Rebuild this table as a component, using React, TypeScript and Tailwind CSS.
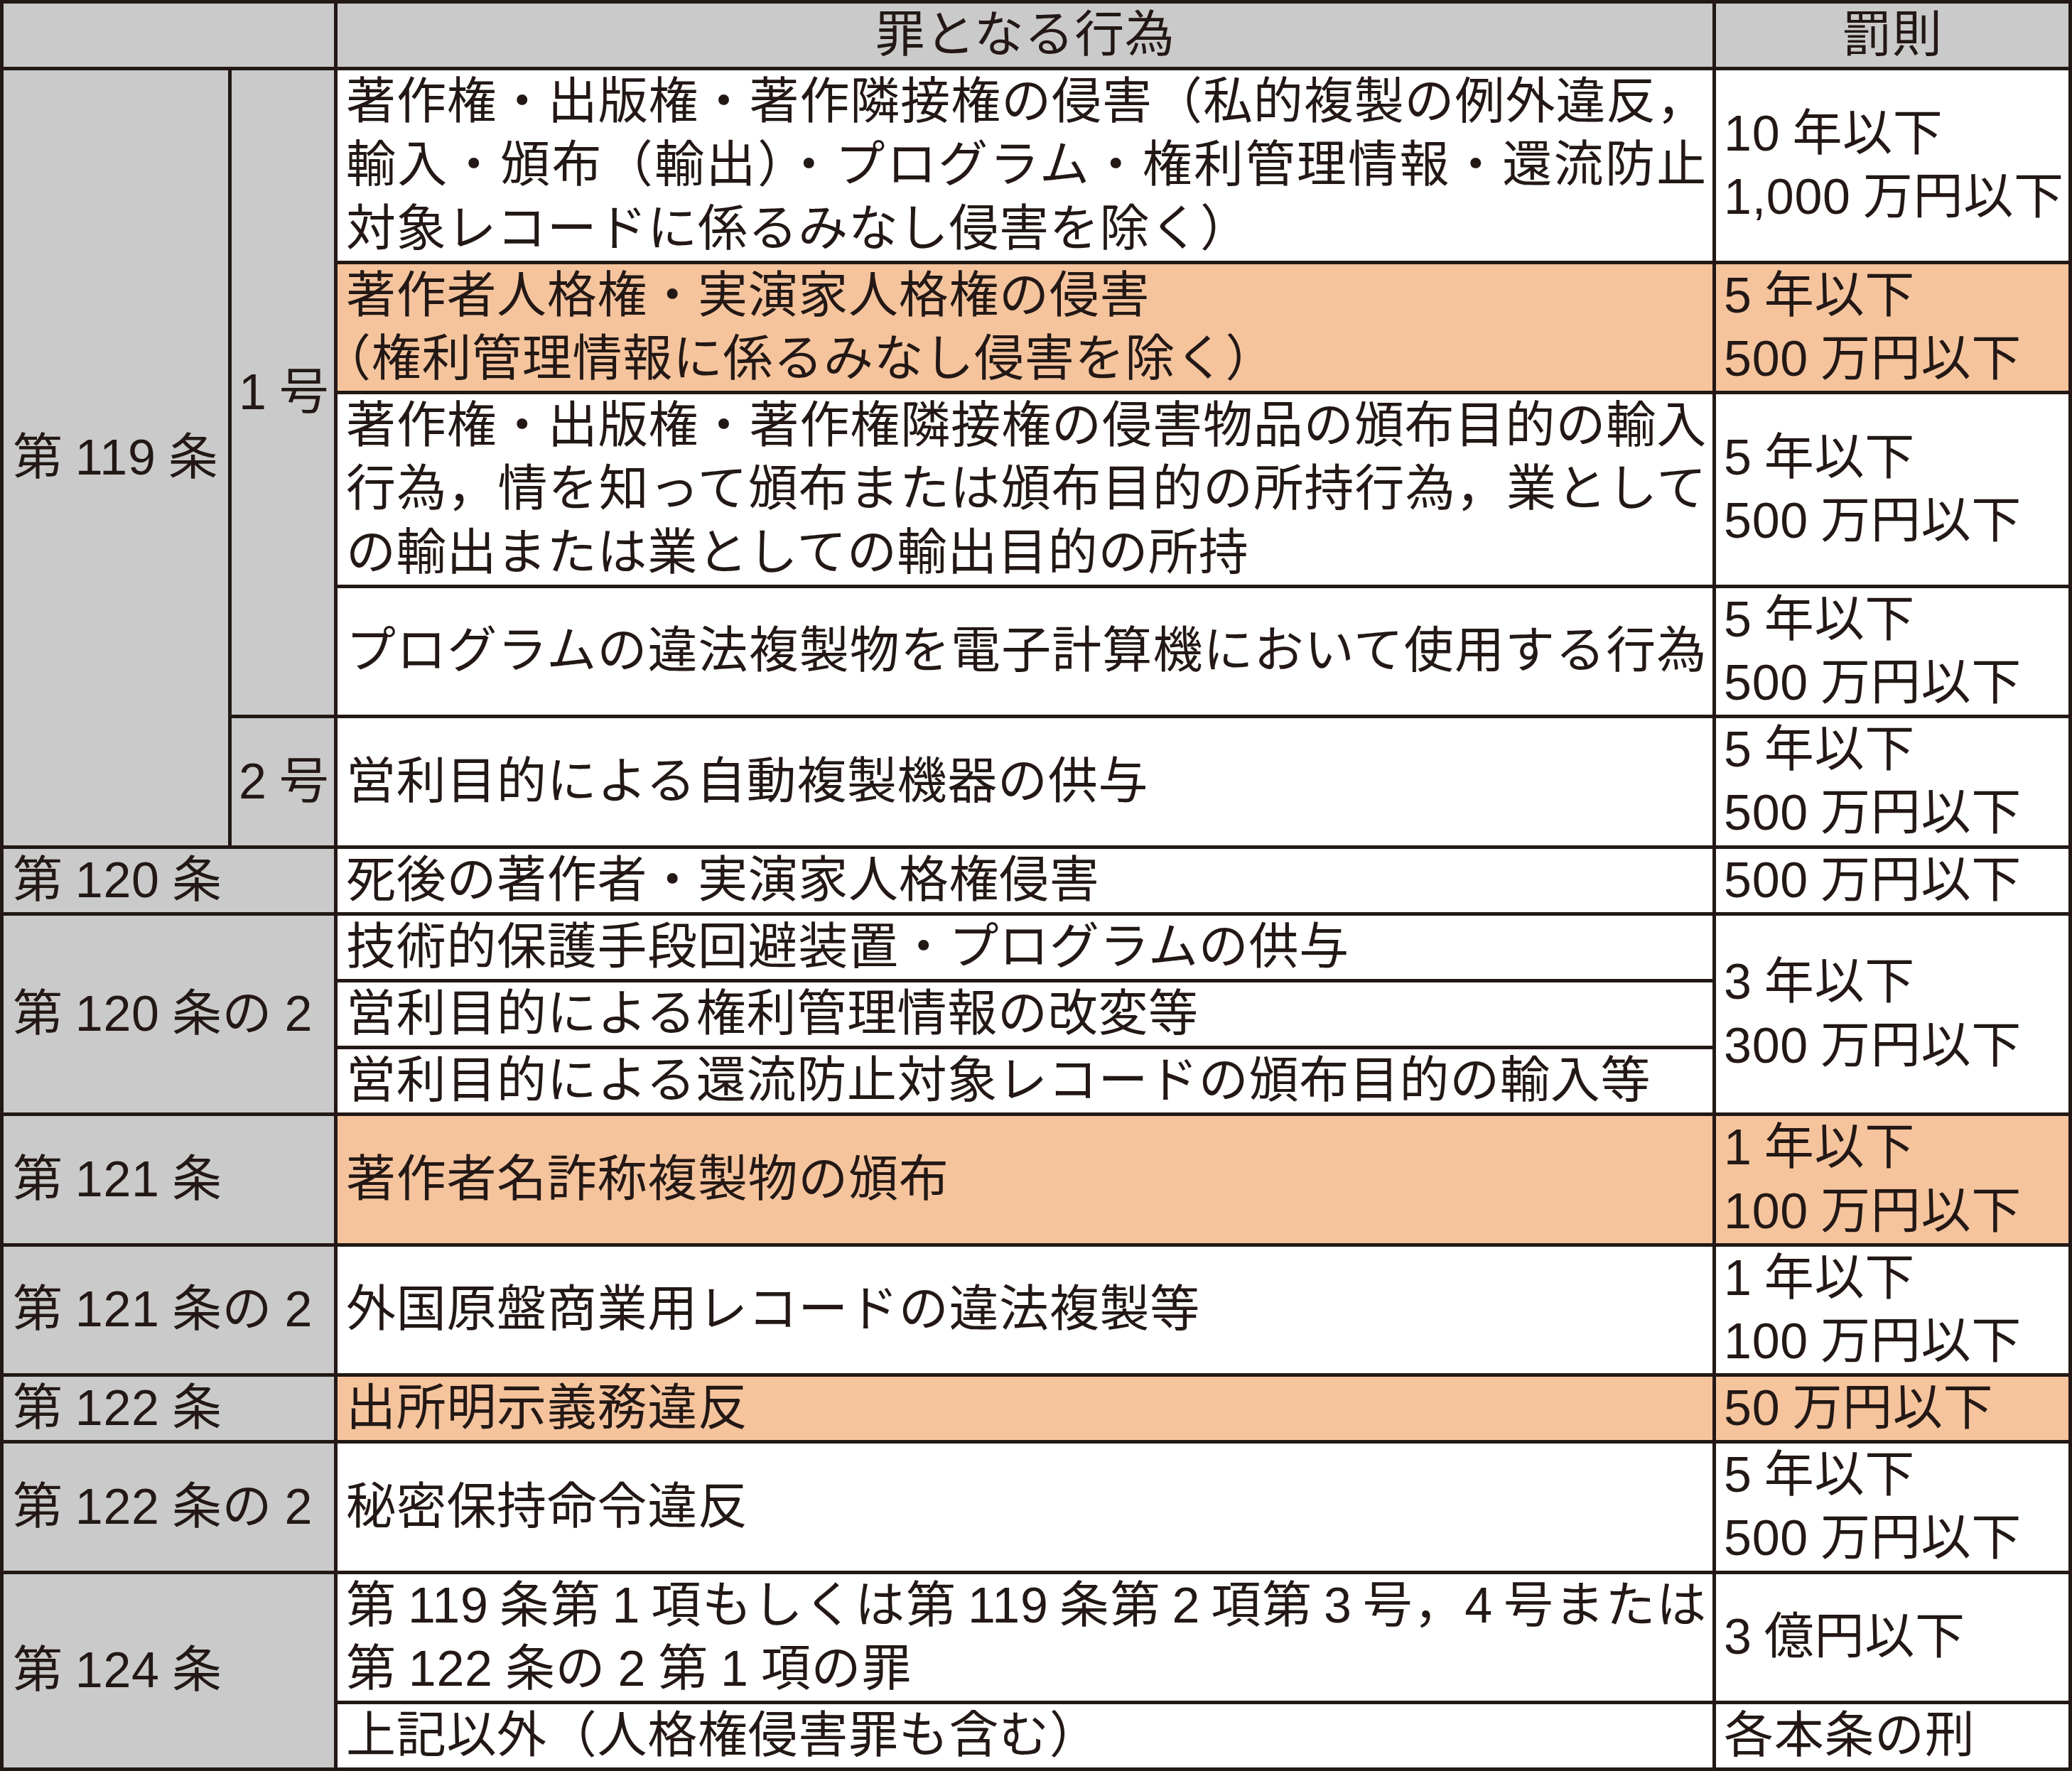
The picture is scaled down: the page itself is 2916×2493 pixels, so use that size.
import React from "react";

const gray = "bg-[#cacaca]";
const orange = "bg-[#f5c49d]";
const white = "bg-white";

// a full-width line, spread to both edges like the printed table
const J = ({ children, className = "" }: { children: React.ReactNode; className?: string }) => (
  <div className={`text-justify [text-align-last:justify] ${className}`}>{children}</div>
);

const Half = ({ children }: { children: React.ReactNode }) => (
  <span className="[font-feature-settings:'halt']">{children}</span>
);

export default function App() {
  return (
    <div
      className="w-[2916px] text-[70px] leading-[89.2px] tracking-[0.7px] text-[#231815] [word-spacing:-3px]"
      style={{ fontFamily: '"Liberation Sans", "Noto Sans CJK JP", sans-serif' }}
    >
      <div className="grid grid-cols-[316px_144px_1935px_496px] grid-rows-[89.2px_267.6px_178.4px_267.6px_178.4px_178.4px_89.2px_89.2px_89.2px_89.2px_178.4px_178.4px_89.2px_178.4px_178.4px_89.2px] gap-[5px] bg-[#231815] p-[5px]">
        {/* header */}
        <div className={`col-start-1 col-span-2 row-start-1 ${gray}`} />
        <div className={`col-start-3 row-start-1 flex items-center justify-center ${gray}`}>罪となる行為</div>
        <div className={`col-start-4 row-start-1 flex items-center justify-center ${gray}`}>罰則</div>

        {/* 第119条 */}
        <div className={`col-start-1 row-start-2 row-span-5 flex items-center pl-[13px] ${gray}`}>第 119 条</div>
        <div className={`col-start-2 row-start-2 row-span-4 flex items-center pl-[10px] ${gray}`}>1 号</div>
        <div className={`col-start-2 row-start-6 flex items-center pl-[10px] ${gray}`}>2 号</div>

        <div className={`col-start-3 row-start-2 pl-[12px] pr-[8px] ${white}`}>
          <J>著作権・出版権・著作隣接権の侵害（私的複製の例外違反，</J>
          <J>輸入・頒布（輸出）・プログラム・権利管理情報・還流防止</J>
          <div>対象レコードに係るみなし侵害を除く）</div>
        </div>
        <div className={`col-start-4 row-start-2 flex flex-col justify-center pl-[11px] ${white}`}>
          <div>10 年以下</div>
          <div>1,000 万円以下</div>
        </div>

        <div className={`col-start-3 row-start-3 pl-[12px] pr-[8px] ${orange}`}>
          <div>著作者人格権・実演家人格権の侵害</div>
          <div>
            <Half>（</Half>権利管理情報に係るみなし侵害を除く）
          </div>
        </div>
        <div className={`col-start-4 row-start-3 flex flex-col justify-center pl-[11px] ${orange}`}>
          <div>5 年以下</div>
          <div>500 万円以下</div>
        </div>

        <div className={`col-start-3 row-start-4 pl-[12px] pr-[8px] ${white}`}>
          <J>著作権・出版権・著作権隣接権の侵害物品の頒布目的の輸入</J>
          <J>行為，情を知って頒布または頒布目的の所持行為，業として</J>
          <div>の輸出または業としての輸出目的の所持</div>
        </div>
        <div className={`col-start-4 row-start-4 flex flex-col justify-center pl-[11px] ${white}`}>
          <div>5 年以下</div>
          <div>500 万円以下</div>
        </div>

        <div className={`col-start-3 row-start-5 flex flex-col justify-center pl-[12px] pr-[8px] ${white}`}>
          <J>プログラムの違法複製物を電子計算機において使用する行為</J>
        </div>
        <div className={`col-start-4 row-start-5 flex flex-col justify-center pl-[11px] ${white}`}>
          <div>5 年以下</div>
          <div>500 万円以下</div>
        </div>

        <div className={`col-start-3 row-start-6 flex items-center pl-[12px] pr-[8px] ${white}`}>
          営利目的による自動複製機器の供与
        </div>
        <div className={`col-start-4 row-start-6 flex flex-col justify-center pl-[11px] ${white}`}>
          <div>5 年以下</div>
          <div>500 万円以下</div>
        </div>

        {/* 第120条 */}
        <div className={`col-start-1 col-span-2 row-start-7 flex items-center pl-[13px] ${gray}`}>第 120 条</div>
        <div className={`col-start-3 row-start-7 flex items-center pl-[12px] ${white}`}>死後の著作者・実演家人格権侵害</div>
        <div className={`col-start-4 row-start-7 flex items-center pl-[11px] ${white}`}>500 万円以下</div>

        {/* 第120条の2 */}
        <div className={`col-start-1 col-span-2 row-start-8 row-span-3 flex items-center pl-[13px] ${gray}`}>第 120 条の 2</div>
        <div className={`col-start-3 row-start-8 flex items-center pl-[12px] ${white}`}>技術的保護手段回避装置・プログラムの供与</div>
        <div className={`col-start-3 row-start-9 flex items-center pl-[12px] ${white}`}>営利目的による権利管理情報の改変等</div>
        <div className={`col-start-3 row-start-10 flex items-center pl-[12px] ${white}`}>営利目的による還流防止対象レコードの頒布目的の輸入等</div>
        <div className={`col-start-4 row-start-8 row-span-3 flex flex-col justify-center pl-[11px] ${white}`}>
          <div>3 年以下</div>
          <div>300 万円以下</div>
        </div>

        {/* 第121条 */}
        <div className={`col-start-1 col-span-2 row-start-11 flex items-center pl-[13px] ${gray}`}>第 121 条</div>
        <div className={`col-start-3 row-start-11 flex items-center pl-[12px] ${orange}`}>著作者名詐称複製物の頒布</div>
        <div className={`col-start-4 row-start-11 flex flex-col justify-center pl-[11px] ${orange}`}>
          <div>1 年以下</div>
          <div>100 万円以下</div>
        </div>

        {/* 第121条の2 */}
        <div className={`col-start-1 col-span-2 row-start-12 flex items-center pl-[13px] ${gray}`}>第 121 条の 2</div>
        <div className={`col-start-3 row-start-12 flex items-center pl-[12px] ${white}`}>外国原盤商業用レコードの違法複製等</div>
        <div className={`col-start-4 row-start-12 flex flex-col justify-center pl-[11px] ${white}`}>
          <div>1 年以下</div>
          <div>100 万円以下</div>
        </div>

        {/* 第122条 */}
        <div className={`col-start-1 col-span-2 row-start-13 flex items-center pl-[13px] ${gray}`}>第 122 条</div>
        <div className={`col-start-3 row-start-13 flex items-center pl-[12px] ${orange}`}>出所明示義務違反</div>
        <div className={`col-start-4 row-start-13 flex items-center pl-[11px] ${orange}`}>50 万円以下</div>

        {/* 第122条の2 */}
        <div className={`col-start-1 col-span-2 row-start-14 flex items-center pl-[13px] ${gray}`}>第 122 条の 2</div>
        <div className={`col-start-3 row-start-14 flex items-center pl-[12px] ${white}`}>秘密保持命令違反</div>
        <div className={`col-start-4 row-start-14 flex flex-col justify-center pl-[11px] ${white}`}>
          <div>5 年以下</div>
          <div>500 万円以下</div>
        </div>

        {/* 第124条 */}
        <div className={`col-start-1 col-span-2 row-start-15 row-span-2 flex items-center pl-[13px] ${gray}`}>第 124 条</div>
        <div className={`col-start-3 row-start-15 pl-[12px] pr-[8px] ${white}`}>
          <J className="[word-spacing:-6px]">第 119 条第 1 項もしくは第 119 条第 2 項第 3 号，4 号または</J>
          <div>第 122 条の 2 第 1 項の罪</div>
        </div>
        <div className={`col-start-4 row-start-15 flex items-center pl-[11px] ${white}`}>3 億円以下</div>
        <div className={`col-start-3 row-start-16 flex items-center pl-[12px] ${white}`}>上記以外（人格権侵害罪も含む）</div>
        <div className={`col-start-4 row-start-16 flex items-center pl-[11px] ${white}`}>各本条の刑</div>
      </div>
    </div>
  );
}
